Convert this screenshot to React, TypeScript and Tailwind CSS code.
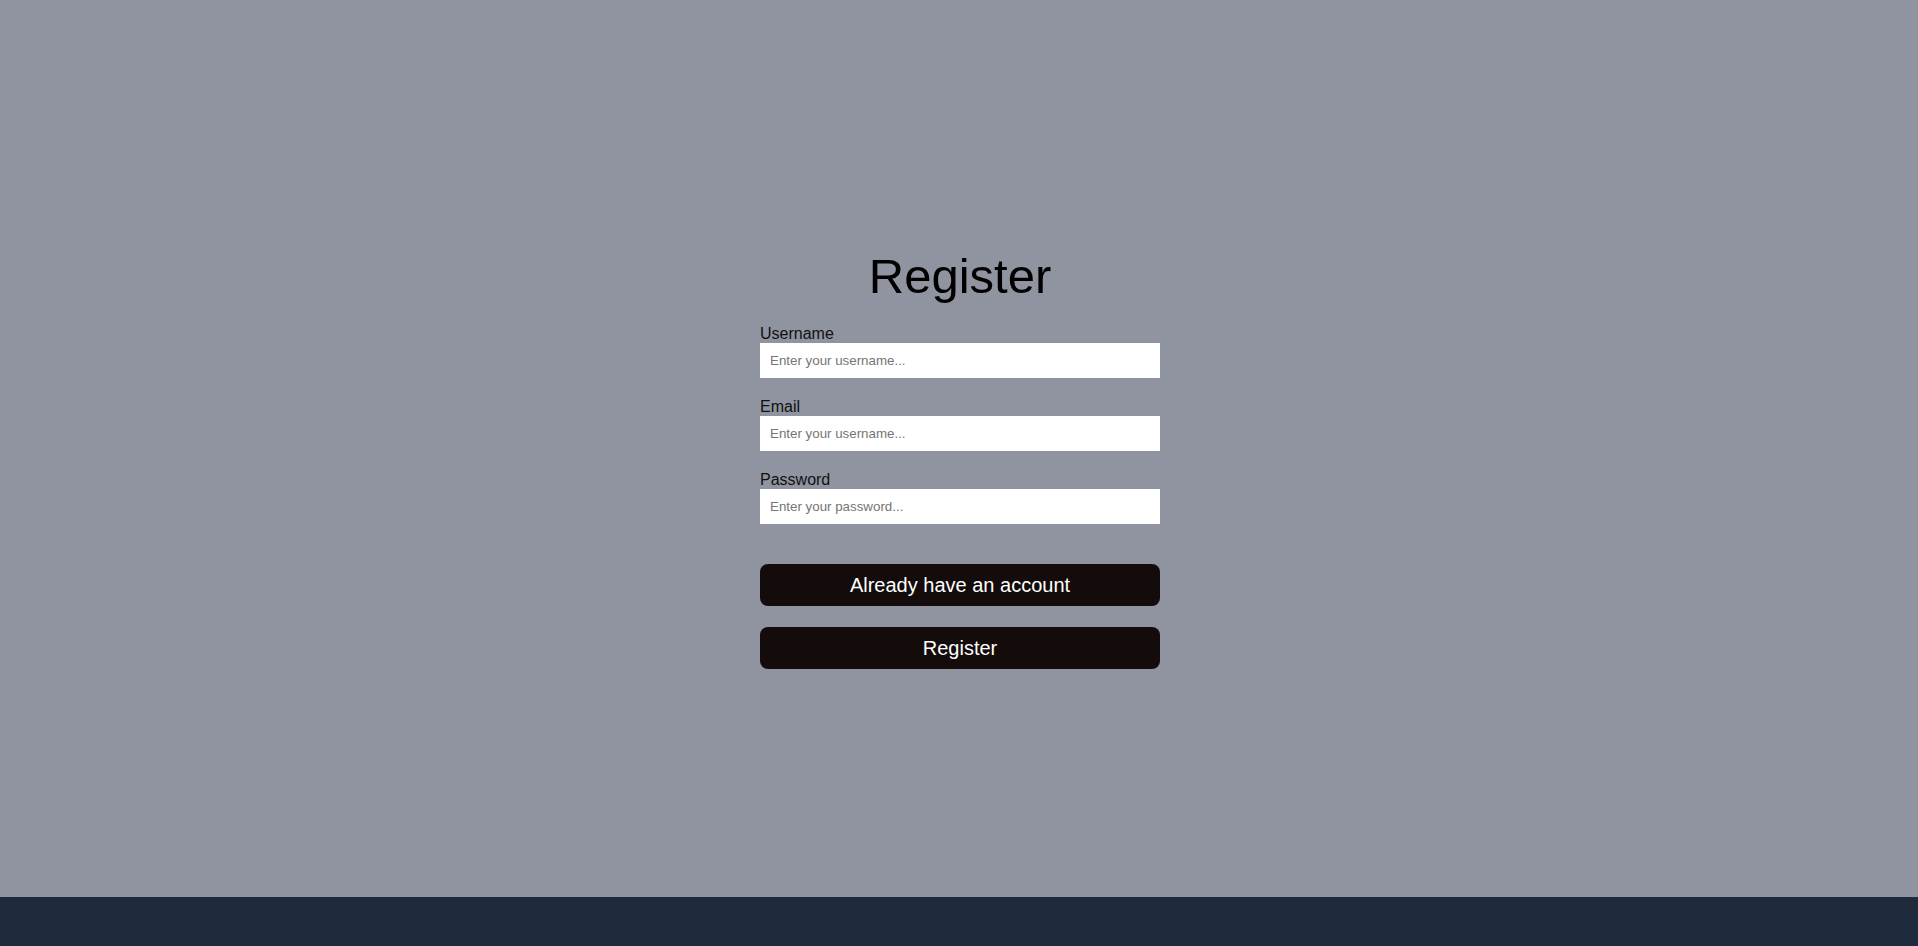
import React from "react";

export default function App() {
  const font = { fontFamily: '"Liberation Sans", Arial, sans-serif' };
  const fields = [
    { label: "Username", placeholder: "Enter your username...", type: "text" },
    { label: "Email", placeholder: "Enter your username...", type: "email" },
    { label: "Password", placeholder: "Enter your password...", type: "password" },
  ];
  return (
    <div className="w-full h-[946px] flex flex-col bg-[#9094a0] font-['Liberation_Sans',Arial,sans-serif]" style={font}>
      <main className="h-[897px] flex flex-col items-center pt-[252px] pl-[2px]">
        <h1 className="text-[49px] leading-none text-black mb-[24px]">Register</h1>
        <form className="w-[400px] flex flex-col" onSubmit={(e) => e.preventDefault()}>
          {fields.map((f) => (
            <div key={f.label} className="flex flex-col mb-[20px]">
              <label className="block text-[16px] leading-[18px] text-[#111]">{f.label}</label>
              <input
                type={f.type}
                placeholder={f.placeholder}
                className="h-[35px] w-full bg-white px-[10px] text-[13.333px] text-black placeholder:text-[#757575] outline-none border-0"
              />
            </div>
          ))}
          <button
            type="button"
            className="mt-[20px] h-[42px] w-full rounded-lg bg-[#140b0b] text-white text-[20px] leading-none"
          >
            Already have an account
          </button>
          <button
            type="submit"
            className="mt-[21px] h-[42px] w-full rounded-lg bg-[#140b0b] text-white text-[20px] leading-none"
          >
            Register
          </button>
        </form>
      </main>
      <footer className="h-[49px] bg-[#1f2a3d]" />
    </div>
  );
}
